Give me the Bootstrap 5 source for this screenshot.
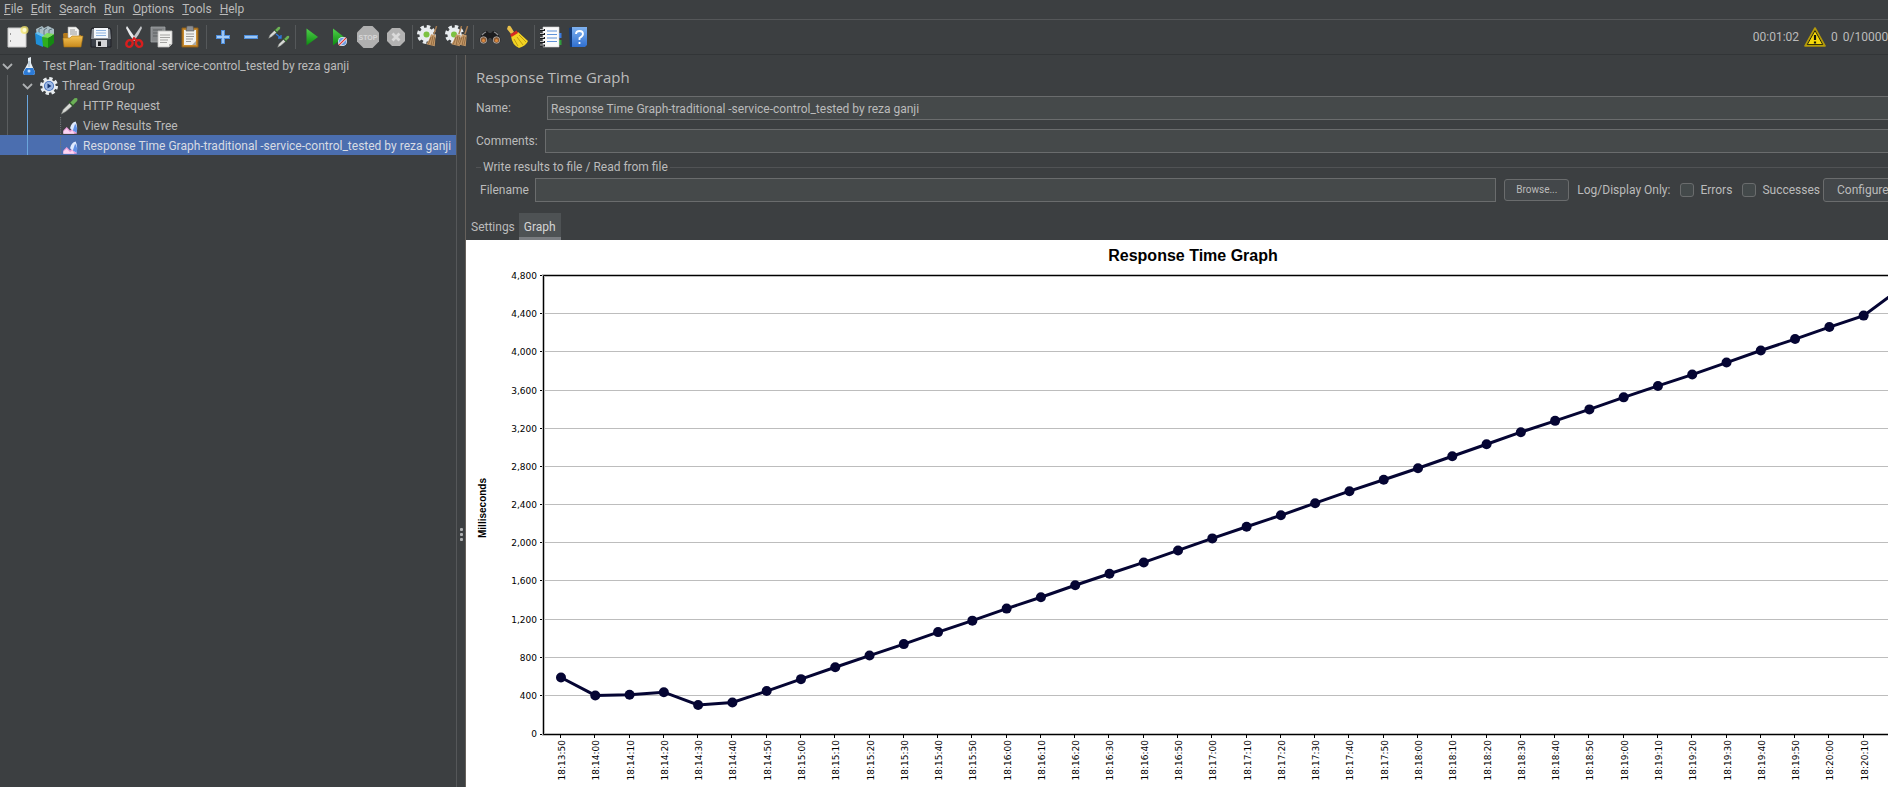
<!DOCTYPE html>
<html lang="en">
<head>
<meta charset="utf-8">
<meta name="viewport" content="width=device-width, initial-scale=1">
<title>Apache JMeter</title>
<link href="https://cdn.jsdelivr.net/npm/bootstrap@5.3.0/dist/css/bootstrap.min.css" rel="stylesheet">
<style>
  :root { --bg: #3c3f41; --line: #555759; --field: #45494a; --edge: #6a6c6d; --ink: #bbbbbb; --sel: #4b6eaf; }
  html, body { overflow: hidden; }
  body { background: var(--bg); color: var(--ink); font-family: Roboto, "Open Sans", sans-serif; font-size: 12px; line-height: 16px; }
  /* the window is wider than the screen: its right edge lies outside */
  .app { width: calc(100% + 32px); height: 100vh; }
  .menubar { height: 20px; padding: 0 0 1px 4px; gap: 8px; border-bottom: 1px solid var(--line); }
  .menubar button, .tool, .tab-btn { background: none; border: 0; padding: 0; color: inherit; }
  .toolbar { height: 35px; padding-left: 3px; border-bottom: 1px solid #323537; }
  .tool { width: 28px; height: 28px; display: flex; align-items: center; justify-content: center; }
  .tool svg { width: 24px; height: 24px; }
  .tool-sep { width: 1px; height: 24px; margin: 0 2px; background: #55585a; }
  .status { padding-right: 25px; gap: 5px; }
  .tree { width: 457px; border-right: 1px solid var(--line); }
  .tree ul { list-style: none; margin: 0; padding: 0; }
  .tree-row { height: 20px; padding-top: 2px; display: flex; align-items: center; white-space: nowrap; }
  .tree-row svg { flex: none; }
  .lvl-1 { padding-left: 1px; gap: 6px; }
  .lvl-2 { padding-left: 21px; gap: 3px; }
  .lvl-3 { padding-left: 60px; gap: 4px; }
  .tree-row.active { background: var(--sel); color: #d8dce4; }
  .branch { position: relative; }
  .branch::before { content: ""; position: absolute; top: 0; bottom: 0; left: 7px; width: 1px; background: #5a5d5f; }
  .branch-inner::before { left: 27px; background: #6aa5dc; }
  .twisty { width: 13px; height: 13px; }
  .splitter { width: 9px; padding-top: 226px; border-right: 1px solid #66615c; }
  .splitter i { width: 3px; height: 3px; border-radius: 1px; background: #b0b2b3; margin: 1px; }
  .field { height: 24px; background: var(--field); border: 1px solid var(--edge); border-radius: 0; color: var(--ink); padding: 1px 3px 0; font-size: 12px; min-width: 0; }
  .panel-title { font-family: "Open Sans", "Noto Sans", sans-serif; font-size: 15px; line-height: 20px; margin: 0; }
  .form-area { padding: 12px 10px 0; }
  .name-row { margin-top: 9px; }
  .filebox { margin-top: 5px; padding: 0 0 11px; }
  .filebox legend { float: none; font-size: 12px; line-height: 16px; margin: 0; padding-top: 1px; display: flex; align-items: center; gap: 2px; white-space: nowrap; }
  .filebox legend::before, .filebox legend::after { content: ""; height: 1px; background: #515355; width: 5px; }
  .filebox legend::after { flex: 1; }
  .file-row { margin-top: 3px; }
  .push { background: #43474a; border: 1px solid var(--edge); border-radius: 3px; color: var(--ink); white-space: nowrap; padding: 0; }
  .push-sm { width: 65px; height: 22px; font-size: 10px; line-height: 14px; }
  .push-md { width: 87px; height: 24px; padding-left: 13px; margin-left: 3px; font-size: 12px; line-height: 16px; text-align: left; }
  .tick { width: 14px; height: 14px; margin: 0 6px 0 10px; border-radius: 2px; background-color: #43494a; border: 1px solid var(--edge); flex: none; }
  .tabs { padding-left: 1px; }
  .tab-btn { height: 27px; padding: 0 4px; }
  .tab-btn.active { background: #4e5254; border-bottom: 3px solid #7a7d81; padding: 3px 5px 0; color: #d5d5d5; }
  .chart { background: #fff; min-height: 0; }
  .chart svg { width: 100%; height: 100%; display: block; font-family: "DejaVu Sans", sans-serif; font-size: 9px; }
</style>
</head>
<body>
<svg width="0" height="0" class="position-absolute" aria-hidden="true">
  <defs>
    <linearGradient id="gGreen" x1="0" y1="0" x2="0" y2="1"><stop offset="0" stop-color="#4fd04a"/><stop offset="1" stop-color="#0c8a10"/></linearGradient>
    <linearGradient id="gGold" x1="0" y1="0" x2="0" y2="1"><stop offset="0" stop-color="#f4c355"/><stop offset="1" stop-color="#c98a1c"/></linearGradient>
    <linearGradient id="gBlue" x1="0" y1="0" x2="0" y2="1"><stop offset="0" stop-color="#7fb2f0"/><stop offset="1" stop-color="#2f6fd0"/></linearGradient>
    <symbol id="gear" viewBox="0 0 24 24"><circle cx="12" cy="12" r="9" fill="#e8ecef"/><circle cx="12" cy="12" r="10" fill="none" stroke="#e8ecef" stroke-width="4" stroke-dasharray="4.4 3.454"/></symbol>
    <symbol id="broom" viewBox="0 0 12 24"><path d="M11 0 8 9" stroke="#a87c50" stroke-width="1.6"/><path d="M5 9 10 10 9 22 0 20Q3 15 5 9Z" fill="#c59a6a"/><path d="M5 12 2 20M7 11 5 21M9 12 7 21" stroke="#8a6238" stroke-width=".9"/></symbol>
    <symbol id="pipette" viewBox="0 0 20 20"><path d="M1 19 3 14 10 7 13 10 6 16Z" fill="#d8dad6" stroke="#7c807c" stroke-width=".7"/><path d="M9.500 5 15 10.500" stroke="#2c5a26" stroke-width="1.800"/><path d="M11 6 15.500 1.500Q20 0 18.500 4.500L14 9Z" fill="#6bb055"/></symbol>
    <symbol id="listener" viewBox="0 0 16 16"><path d="M.5 0V16" stroke="#6f7476" stroke-dasharray="1 1"/><path d="M3 12 6 9 9 12 11 10 15 14V15H3Z" fill="#ec9fdc"/><path d="M3 13 6 10.500 9 13.500 11 12 13 15H3Z" fill="#fbd6f2"/><path d="M9 10Q10 5 14 4Q16 8 15 14Q12 13 9 10Z" fill="#dfeaff"/><path d="M13.500 6Q16 9 15 14L11.500 12Z" fill="#5f8fe6"/></symbol>
  </defs>
</svg>

<div class="app d-flex flex-column">
  <nav class="menubar d-flex align-items-center flex-shrink-0" aria-label="Main menu">
    <button type="button"><u>F</u>ile</button>
    <button type="button"><u>E</u>dit</button>
    <button type="button"><u>S</u>earch</button>
    <button type="button"><u>R</u>un</button>
    <button type="button"><u>O</u>ptions</button>
    <button type="button"><u>T</u>ools</button>
    <button type="button"><u>H</u>elp</button>
  </nav>

  <div class="toolbar d-flex align-items-center flex-shrink-0" role="toolbar" aria-label="Tools">
    <button class="tool" type="button" aria-label="New"><svg viewBox="0 0 24 24"><path d="M3 3H21V22H3Z" fill="#efefef" stroke="#c8c8c8"/><path d="M5.500 8V10M5.500 15V17" stroke="#999"/><circle cx="19.500" cy="5" r="4" fill="#f3e66a" opacity=".75"/><circle cx="19.500" cy="5" r="2" fill="#fffbd0"/></svg></button>
    <button class="tool" type="button" aria-label="Templates"><svg viewBox="0 0 24 24"><path d="M3 4 9 1 11 3 15 1 21 4V12L4 12Z" fill="#a9bcc4"/><path d="M6 9V4L9 3M11 10V5L14 3M16 9V5L19 4" stroke="#5f747e" fill="none"/><path d="M2 8 10 12V22L3 19Z" fill="#1f8fd8"/><path d="M2 8 5 7 11 10 10 12Z" fill="#6cc4f2"/><path d="M9 12 15 13V23L10 21Z" fill="#2fae1d"/><path d="M15 13 21 9V18L15 23Z" fill="#158812"/><path d="M9 12 14 8 21 9 15 13Z" fill="#7bdc58"/></svg></button>
    <button class="tool" type="button" aria-label="Open"><svg viewBox="0 0 24 24"><path d="M2 9 3 8H9L11 10H20V20H3Z" fill="#b57a1a"/><path d="M7 2H15L18 5V14H7Z" fill="#f4f4f2" stroke="#aaa" stroke-width=".6"/><path d="M9 5H14M9 7H16M9 9H16" stroke="#999"/><path d="M2 13H9L11 11H22L20 22H3Z" fill="url(#gGold)" stroke="#a87414" stroke-width=".6"/></svg></button>
    <button class="tool" type="button" aria-label="Save"><svg viewBox="0 0 24 24"><path d="M3 3H21L22 5V22H2V5Z" fill="#3b4048" stroke="#191b1e" stroke-width=".8"/><path d="M3 4H21L22 14H2Z" fill="#8c9096"/><path d="M5 3H19V13H5Z" fill="#f4f8fc"/><path d="M7 5.500H17M7 8H17M7 10.500H17" stroke="#8db2de"/><path d="M7 15H18V22H7Z" fill="#d4d5d8"/><path d="M9 16.500H12V21H9Z" fill="#17191c"/></svg></button>
    <span class="tool-sep"></span>
    <button class="tool" type="button" aria-label="Cut"><svg viewBox="0 0 24 24"><path d="M5 1 14 14 12 16Q7 10 4 3Z" fill="#e8eaec"/><path d="M19 1 10 14 12 16Q17 10 20 3Z" fill="#c2c5c8"/><ellipse cx="7.500" cy="18.500" rx="3" ry="3.500" transform="rotate(35 7.500 18.500)" fill="none" stroke="#d81e1e" stroke-width="2.400"/><ellipse cx="17" cy="18.500" rx="3" ry="3.500" transform="rotate(-35 17 18.500)" fill="none" stroke="#d81e1e" stroke-width="2.400"/><path d="M10 16 12 13 15 16" stroke="#d81e1e" stroke-width="2" fill="none"/></svg></button>
    <button class="tool" type="button" aria-label="Copy"><svg viewBox="0 0 24 24"><path d="M1 2H15V17H1Z" fill="#85888a" stroke="#a0a3a5" stroke-width=".8"/><path d="M3 5H12M3 8H9M3 11H9" stroke="#5d6062"/><path d="M8 6H22V19L19 22H8Z" fill="#f1f1ef" stroke="#bdbdbb" stroke-width=".8"/><path d="M10 10H20M10 12.500H20M10 15H18M10 17.500H17" stroke="#a3a3a1"/><path d="M19 22V19H22Z" fill="#b0b0ae"/></svg></button>
    <button class="tool" type="button" aria-label="Paste"><svg viewBox="0 0 24 24"><path d="M4 3H20V22H4Z" fill="#c98a2c" stroke="#8c5d16"/><path d="M6 5H18V20H6Z" fill="#f1f1ee"/><path d="M9 1H15L16 6H8Z" fill="#8b8e92" stroke="#555" stroke-width=".6"/><path d="M8 9H16M8 11.500H16M8 14H15M8 16.500H13" stroke="#999"/><path d="M14 20 18 16V20Z" fill="#a9a9a6"/></svg></button>
    <span class="tool-sep"></span>
    <button class="tool" type="button" aria-label="Expand"><svg viewBox="0 0 24 24"><path d="M12 5V19M5 12H19" stroke="#4f8fdc" stroke-width="4"/><path d="M12 6V18M6 12H18" stroke="#a6cdf7" stroke-width="1.800"/></svg></button>
    <button class="tool" type="button" aria-label="Collapse"><svg viewBox="0 0 24 24"><path d="M5 12H19" stroke="#4f8fdc" stroke-width="4"/><path d="M6 12H18" stroke="#a6cdf7" stroke-width="1.800"/></svg></button>
    <button class="tool" type="button" aria-label="Toggle"><svg viewBox="0 0 24 24"><use href="#pipette" x="1" y="1" width="13" height="13"/><use href="#pipette" x="10" y="10" width="13" height="13"/><path d="M9 9 14 13M14 10V13H11" stroke="#2f7be0" stroke-width="1.300" fill="none"/></svg></button>
    <span class="tool-sep"></span>
    <button class="tool" type="button" aria-label="Start"><svg viewBox="0 0 24 24"><path d="M6.500 3.500 18 12 6.500 20.500Z" fill="url(#gGreen)"/></svg></button>
    <button class="tool" type="button" aria-label="Start no pauses"><svg viewBox="0 0 24 24"><path d="M5 3.500 16 12 5 20.500Z" fill="url(#gGreen)"/><circle cx="14.500" cy="16.500" r="4.500" fill="#eaf1fb"/><circle cx="14.500" cy="16.500" r="3.800" fill="#6f9be0"/><path d="M11 20 18 13" stroke="#fff" stroke-width="2.600"/><path d="M11 20 18 13" stroke="#d63b3b" stroke-width="1.300"/></svg></button>
    <button class="tool" type="button" aria-label="Stop" disabled><svg viewBox="0 0 24 24"><path d="M7.500 1H16.500L23 7.500V16.500L16.500 23H7.500L1 16.500V7.500Z" fill="#b0b0b0"/><text x="12" y="15" text-anchor="middle" font-family="Liberation Sans, Arial, sans-serif" font-weight="bold" font-size="7" fill="#d6d6d6">STOP</text></svg></button>
    <button class="tool" type="button" aria-label="Shutdown" disabled><svg viewBox="0 0 24 24"><path d="M8 3H16L21 8V16L16 21H8L3 16V8Z" fill="#b2b2b2"/><path d="M8.500 8.500 15.500 15.500M15.500 8.500 8.500 15.500" stroke="#dadada" stroke-width="2.800"/></svg></button>
    <span class="tool-sep"></span>
    <button class="tool" type="button" aria-label="Clear"><svg viewBox="0 0 24 24"><use href="#gear" x="0" y="0" width="19" height="19"/><circle cx="9.500" cy="9.500" r="3" fill="#7cc242"/><use href="#broom" x="9" y="1" width="12" height="22"/></svg></button>
    <button class="tool" type="button" aria-label="Clear all"><svg viewBox="0 0 24 24"><use href="#gear" x="0" y="0" width="19" height="19"/><circle cx="9" cy="9.500" r="3" fill="#7cc242"/><use href="#broom" x="6" y="1" width="12" height="22"/><use href="#broom" x="12" y="1" width="12" height="22"/></svg></button>
    <span class="tool-sep"></span>
    <button class="tool" type="button" aria-label="Search"><svg viewBox="0 0 24 24"><path d="M5 7 9 6 11 8H13L15 6 19 7 23 15Q21 20 16 18L13 13H11L8 18Q3 20 1 15Z" fill="#1c1c1e"/><path d="M6 8 8 7M16 7 18 8M4 10 6 8M20 10 18 8" stroke="#8b8d90" stroke-width="1.200"/><circle cx="5.500" cy="15" r="3.300" fill="#8a5a34" stroke="#b9b9b9" stroke-width=".8"/><circle cx="18.500" cy="15" r="3.300" fill="#8a5a34" stroke="#b9b9b9" stroke-width=".8"/><circle cx="5.500" cy="15.500" r="1.500" fill="#e08a3c"/><circle cx="18.500" cy="15.500" r="1.500" fill="#e08a3c"/></svg></button>
    <button class="tool" type="button" aria-label="Clear search"><svg viewBox="0 0 24 24"><path d="M2 1Q4 0 5 2L8 7 5 9 1 4Z" fill="#e8c04a"/><path d="M5 11 12 7 22 16Q20 21 13 23Q6 20 5 11Z" fill="#f2d322"/><path d="M8 14 12 21M11 12 17 20M13 10 20 17" stroke="#bd9a10"/><path d="M4 9.500 10.500 5.500 12 8 5.500 12Z" fill="#d42a22"/></svg></button>
    <span class="tool-sep"></span>
    <button class="tool" type="button" aria-label="Function helper"><svg viewBox="0 0 24 24"><path d="M19 8H22.500V13H19Z" fill="#3a7be0"/><path d="M19 15H22.500V20H19Z" fill="#2f9e3c"/><path d="M4 2H20V22H4Z" fill="#fbfbfb" stroke="#d0d0d0" stroke-width=".6"/><path d="M8 6H18M8 9.500H18M8 13H18M8 16.500H18" stroke="#5f92d8" stroke-width="1.200"/><path d="M1 5H6M1 9H6M1 13H6M1 17H6M1 20.500H6" stroke="#15171a" stroke-width="1.800"/><path d="M1 4.500H5M1 8.500H5M1 12.500H5M1 16.500H5M1 20H5" stroke="#e6e6e6" stroke-width=".8"/></svg></button>
    <button class="tool" type="button" aria-label="Help"><svg viewBox="0 0 24 24"><path d="M2 3 6 2V22H3Z" fill="#123a78"/><path d="M5 2H20V20L18 22H5Z" fill="url(#gBlue)"/><path d="M9 9Q9 6 12.500 6T16 9Q16 11 12.500 13V15M12.500 17V19" stroke="#fff" stroke-width="1.800" fill="none"/></svg></button>

    <div class="status d-flex align-items-center ms-auto text-nowrap">
      <span>00:01:02</span>
      <svg width="22" height="20" viewBox="0 0 22 20"><path d="M11 1 21 19H1Z" fill="#f5d90a" stroke="#b49a0a" stroke-width="1.600" stroke-linejoin="round"/><path d="M11 3.500 18.800 17.600H3.200Z" fill="#f5d90a" stroke="#23200a"/><path d="M11 8V13M11 14.500V16.500" stroke="#15150a" stroke-width="2.200"/></svg>
      <span>0</span>
      <span>0/100000</span>
    </div>
  </div>

  <div class="d-flex flex-grow-1" style="min-height:0">
    <aside class="tree flex-shrink-0" aria-label="Test plan tree">
      <div class="tree-row lvl-1">
        <svg class="twisty" viewBox="0 0 13 13"><path d="M2 4 6.500 8.500 11 4" fill="none" stroke="#adb0b2" stroke-width="1.800"/></svg>
        <svg width="17" height="18" viewBox="-2 0 17 18"><path d="M6 1 9 0V6L13 15Q13 18 11 18H3Q1 18 1 15L6 6Z" fill="#e6eef4"/><path d="M4 11H11L13 15Q13 18 11 18H3Q1 18 1.500 15Z" fill="#2d7bd6"/><path d="M7 4V10" stroke="#9fb4c4"/><circle cx="7" cy="14" r="1.500" fill="#bcdcff"/></svg>
        <span>Test Plan- Traditional -service-control_tested by reza ganji</span>
      </div>
      <ul class="branch">
        <li>
          <div class="tree-row lvl-2">
            <svg class="twisty" viewBox="0 0 13 13"><path d="M2 4 6.500 8.500 11 4" fill="none" stroke="#adb0b2" stroke-width="1.800"/></svg>
            <svg width="22" height="18" viewBox="0 0 22 18"><use href="#gear" x="3" width="18" height="18"/><circle cx="12" cy="9" r="5" fill="#3f6ab8"/><circle cx="12" cy="9" r="4.200" fill="#9db9e6"/><path d="M10.500 6.500 14.500 9 10.500 11.500Z" fill="#17356e"/></svg>
            <span>Thread Group</span>
          </div>
          <ul class="branch branch-inner">
            <li class="tree-row lvl-3"><svg width="19" height="18" viewBox="0 0 20 20"><use href="#pipette"/></svg><span>HTTP Request</span></li>
            <li class="tree-row lvl-3"><svg width="19" height="18" viewBox="0 0 17 16"><use href="#listener" width="16" height="16"/></svg><span>View Results Tree</span></li>
            <li class="tree-row lvl-3 active"><svg width="19" height="18" viewBox="0 0 17 16"><use href="#listener" width="16" height="16"/></svg><span>Response Time Graph-traditional -service-control_tested by reza ganji</span></li>
          </ul>
        </li>
      </ul>
    </aside>
    <div class="splitter d-flex flex-column align-items-center justify-content-center flex-shrink-0"><i></i><i></i><i></i></div>

    <main class="d-flex flex-column flex-grow-1" style="min-width:0">
      <form class="form-area flex-shrink-0">
        <h1 class="panel-title fw-normal">Response Time Graph</h1>
        <div class="d-flex align-items-center name-row">
          <label for="name" style="width:71px">Name:</label>
          <input id="name" type="text" class="field flex-grow-1" value="Response Time Graph-traditional -service-control_tested by reza ganji">
        </div>
        <div class="d-flex align-items-center name-row">
          <label for="comments" style="width:69px">Comments:</label>
          <input id="comments" type="text" class="field flex-grow-1">
        </div>
        <fieldset class="filebox">
          <legend>Write results to file / Read from file</legend>
          <div class="file-row d-flex align-items-center text-nowrap ps-1">
            <label for="file" style="width:55px">Filename</label>
            <input id="file" type="text" class="field flex-grow-1">
            <button type="button" class="push push-sm ms-2">Browse...</button>
            <span class="ms-2">Log/Display Only:</span>
            <input id="err" type="checkbox" class="form-check-input tick">
            <label for="err">Errors</label>
            <input id="suc" type="checkbox" class="form-check-input tick">
            <label for="suc">Successes</label>
            <button type="button" class="push push-md">Configure</button>
          </div>
        </fieldset>
      </form>
      <div class="tabs d-flex flex-shrink-0" role="tablist">
        <button class="tab-btn" type="button" role="tab" aria-selected="false">Settings</button>
        <button class="tab-btn active" type="button" role="tab" aria-selected="true">Graph</button>
      </div>
      <div class="chart flex-grow-1"><svg id="graph" role="img" aria-label="Response Time Graph"></svg></div>
    </main>
  </div>
</div>
<script>
  // one sample every ten seconds, in milliseconds, starting at 18:13:50
  const samples = [592, 404, 412, 438, 304, 330, 450, 575, 700, 822, 942, 1068, 1188, 1314, 1433, 1559, 1679, 1798, 1924, 2050, 2172, 2292, 2419, 2545, 2665, 2785, 2911, 3037, 3163, 3282, 3402, 3528, 3648, 3767, 3893, 4019, 4139, 4265, 4385, 4650];
  const left = 78, top0 = 36, bottom = 494, step = 34.28, max = 4800;
  const y = v => bottom - v * (bottom - top0) / max;
  const x = i => left + 17 + i * step;
  const pad = n => String(n).padStart(2, '0');
  let s = '<text x="50%" y="21" text-anchor="middle" font-family="Liberation Sans, Arial, sans-serif" font-size="16" font-weight="bold">Response Time Graph</text>';
  s += `<text transform="translate(20 ${bottom - 196}) rotate(-90)" font-family="Liberation Sans, Arial, sans-serif" font-size="10" font-weight="bold">Milliseconds</text>`;
  for (let v = 0; v <= max; v += 400) {
    const yy = Math.round(y(v));
    if (v > 0 && v < max) s += `<rect x="${left}" y="${yy - 1}" width="100%" height="1" fill="#bdbdbd"/>`;
    s += `<rect x="${left - 4}" y="${v ? yy - 1 : yy}" width="4" height="1"/>`;
    s += `<text x="${left - 7}" y="${yy + 3}" text-anchor="end">${v.toLocaleString('en-US')}</text>`;
  }
  s += `<path d="M2000 ${top0 - .5}H${left - .5}V${bottom + .5}H2000" fill="none" stroke="#bdbdbd" stroke-width="3"/>`;
  s += `<path d="M2000 ${top0 - .5}H${left - .5}V${bottom + .5}H2000" fill="none" stroke="#000" stroke-width="1"/>`;
  samples.slice(0, -1).forEach((v, i) => {
    const t = 18 * 3600 + 13 * 60 + 50 + i * 10;
    const label = [Math.floor(t / 3600), pad(Math.floor(t / 60) % 60), pad(t % 60)].join(':');
    s += `<rect x="${Math.round(x(i)) - 1}" y="${bottom + 1}" width="1" height="3"/>`;
    s += `<text transform="translate(${Math.round(x(i)) + 4} ${bottom + 6}) rotate(-90)" text-anchor="end">${label}</text>`;
  });
  s += `<polyline points="${samples.map((v, i) => x(i) + ',' + y(v)).join(' ')}" fill="none" stroke="#050533" stroke-width="3"/>`;
  samples.forEach((v, i) => { s += `<circle cx="${x(i)}" cy="${y(v)}" r="5" fill="#050533"/>`; });
  document.getElementById('graph').innerHTML = s;
</script>
<script src="https://cdn.jsdelivr.net/npm/bootstrap@5.3.0/dist/js/bootstrap.bundle.min.js"></script>
</body>
</html>
